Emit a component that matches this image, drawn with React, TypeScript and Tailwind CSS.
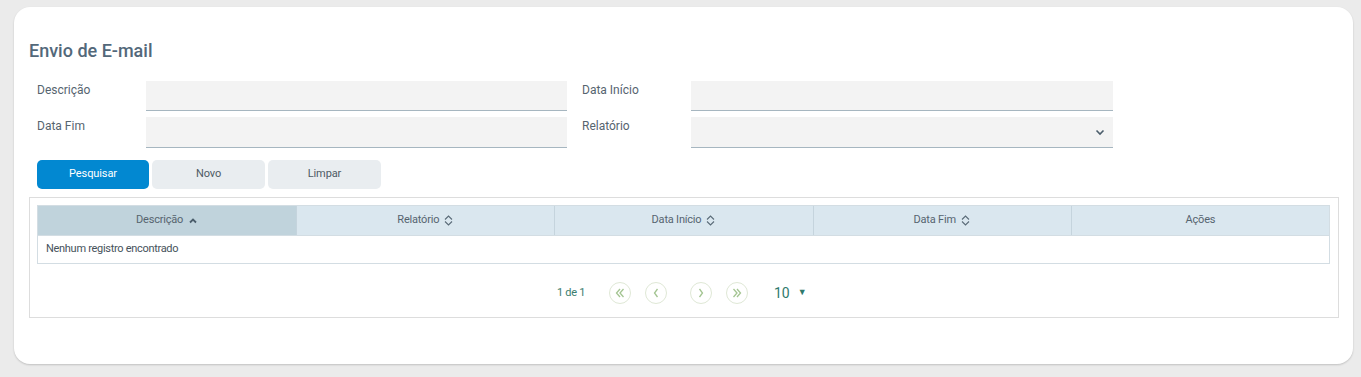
import React from "react";

const ChevronUp = () => (
  <svg width="10" height="10" viewBox="0 0 10 10" className="inline-block">
    <path d="M2 6.5 L5 3.5 L8 6.5" fill="none" stroke="#4b5d6b" strokeWidth="1.8" />
  </svg>
);
const SortBoth = () => (
  <svg width="11" height="13" viewBox="0 0 11 13" className="inline-block">
    <path d="M2 5.5 L5.5 2 L9 5.5" fill="none" stroke="#5a6b78" strokeWidth="1.1" />
    <path d="M2 7.5 L5.5 11 L9 7.5" fill="none" stroke="#5a6b78" strokeWidth="1.1" />
  </svg>
);

const PageBtn = ({ d }: { d: string }) => (
  <div className="w-[22px] h-[22px] rounded-full border border-[#dfe8d6] flex items-center justify-center">
    <svg width="14" height="14" viewBox="0 0 14 14">
      <path d={d} fill="none" stroke="#a3c491" strokeWidth="1.3" />
    </svg>
  </div>
);

export default function App() {
  const font = { fontFamily: "Roboto, 'Noto Sans', sans-serif" };
  return (
    <div className="w-[1361px] h-[377px] bg-[#ebebeb] pt-[7px] pl-[14px] pr-[8px]" style={font}>
      <div className="bg-white rounded-[16px] h-[357px] shadow-[0_1px_2px_rgba(0,0,0,0.18)] pt-[32px] pl-[15px] pr-[14px]">
        <h1 className="text-[18px] font-medium text-[#53687a] leading-[24px]">Envio de E-mail</h1>
        <div className="mt-[18px] pl-[8px] flex flex-col gap-[6px] text-[12px] text-[#56646f]">
          <div className="flex">
            <div className="w-[109px] leading-[18px]">Descrição</div>
            <div className="w-[421px] h-[30px] bg-[#f3f3f3] border-b border-[#a6b6c0]" />
            <div className="w-[15px]" />
            <div className="w-[109px] leading-[18px]">Data Início</div>
            <div className="w-[422px] h-[30px] bg-[#f3f3f3] border-b border-[#a6b6c0]" />
          </div>
          <div className="flex">
            <div className="w-[109px] leading-[18px]">Data Fim</div>
            <div className="w-[421px] h-[31px] bg-[#f3f3f3] border-b border-[#a6b6c0]" />
            <div className="w-[15px]" />
            <div className="w-[109px] leading-[18px]">Relatório</div>
            <div className="w-[422px] h-[31px] bg-[#f3f3f3] border-b border-[#a6b6c0] flex items-center justify-end pr-[7px]">
              <svg width="12" height="12" viewBox="0 0 12 12">
                <path d="M2.5 4.5 L6 8 L9.5 4.5" fill="none" stroke="#4b5d6b" strokeWidth="1.6" />
              </svg>
            </div>
          </div>
        </div>
        <div className="mt-[12px] pl-[8px] flex gap-[3px] text-[11px] tracking-[-0.1px]">
          <button className="w-[112px] h-[29px] rounded-[5px] bg-[#0288d1] text-white">Pesquisar</button>
          <button className="w-[113px] h-[29px] rounded-[5px] bg-[#e9edf0] text-[#4d5a64]">Novo</button>
          <button className="w-[113px] h-[29px] rounded-[5px] bg-[#e9edf0] text-[#4d5a64]">Limpar</button>
        </div>
        <div className="mt-[8px] border border-[#dddddd] h-[121px] px-[7px] pt-[7px]">
          <div className="border border-[#d3dde3] mr-[1px]">
            <div className="grid grid-cols-5 h-[29px] text-[11px] tracking-[-0.2px] text-[#56646f]">
              <div className="bg-[#c0d3dc] flex items-center justify-center gap-[5px]">Descrição <ChevronUp /></div>
              <div className="bg-[#dae7ef] border-l border-[#c5d4dd] flex items-center justify-center gap-[4px]">Relatório <SortBoth /></div>
              <div className="bg-[#dae7ef] border-l border-[#c5d4dd] flex items-center justify-center gap-[4px]">Data Início <SortBoth /></div>
              <div className="bg-[#dae7ef] border-l border-[#c5d4dd] flex items-center justify-center gap-[4px]">Data Fim <SortBoth /></div>
              <div className="bg-[#dae7ef] border-l border-[#c5d4dd] flex items-center justify-center">Ações</div>
            </div>
            <div className="h-[28px] border-t border-[#d3dde3] flex items-center pl-[8px] text-[11px] tracking-[-0.3px] text-[#46525b]">
              Nenhum registro encontrado
            </div>
          </div>
          <div className="mt-[18px] pl-[520px] flex items-center">
            <span className="text-[11px] tracking-[-0.3px] text-[#3a7d6e] w-[52px]">1 de 1</span>
            <PageBtn d="M7 3 L3.5 7 L7 11 M10.5 3 L7 7 L10.5 11" />
            <div className="w-[14px]" />
            <PageBtn d="M8.5 3 L5.5 7 L8.5 11" />
            <div className="w-[23px]" />
            <PageBtn d="M5.5 3 L8.5 7 L5.5 11" />
            <div className="w-[14px]" />
            <PageBtn d="M3.5 3 L7 7 L3.5 11 M7 3 L10.5 7 L7 11" />
            <span className="ml-[26px] text-[14px] text-[#2f7a6c]">10</span>
            <span className="ml-[8px] text-[9px] text-[#2f7a6c]">▼</span>
          </div>
        </div>
      </div>
    </div>
  );
}
